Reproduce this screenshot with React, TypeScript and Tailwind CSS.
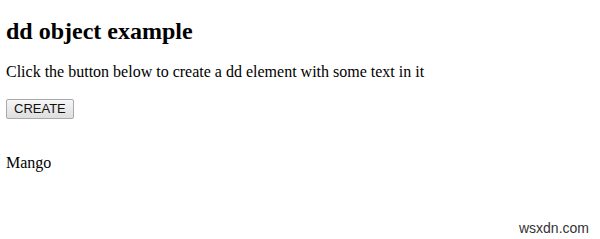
export default function App() {
  return (
    <div className="relative w-[600px] h-[239px] bg-white text-black overflow-hidden">
      <div className="px-[6px] pt-[17px] font-['Liberation_Serif',serif]">
        <h1 className="text-[24px] font-bold leading-[28px]">dd object example</h1>
        <p className="mt-[18px] text-[16px] leading-[18px]">Click the button below to create a dd element with some text in it</p>
        <button className="mt-[18px] h-[20px] px-[7px] border border-[#a9a9a9] rounded-[2px] bg-gradient-to-b from-[#f6f6f6] to-[#dedede] font-['Liberation_Sans',sans-serif] text-[13px] leading-[18px] text-[#111]">
          CREATE
        </button>
        <div className="mt-[34px] text-[16px] leading-[18px]">Mango</div>
      </div>
      <div className="absolute right-[11px] bottom-[3px] font-['Liberation_Sans',sans-serif] text-[14px] leading-[16px] text-[#333]">wsxdn.com</div>
    </div>
  );
}
